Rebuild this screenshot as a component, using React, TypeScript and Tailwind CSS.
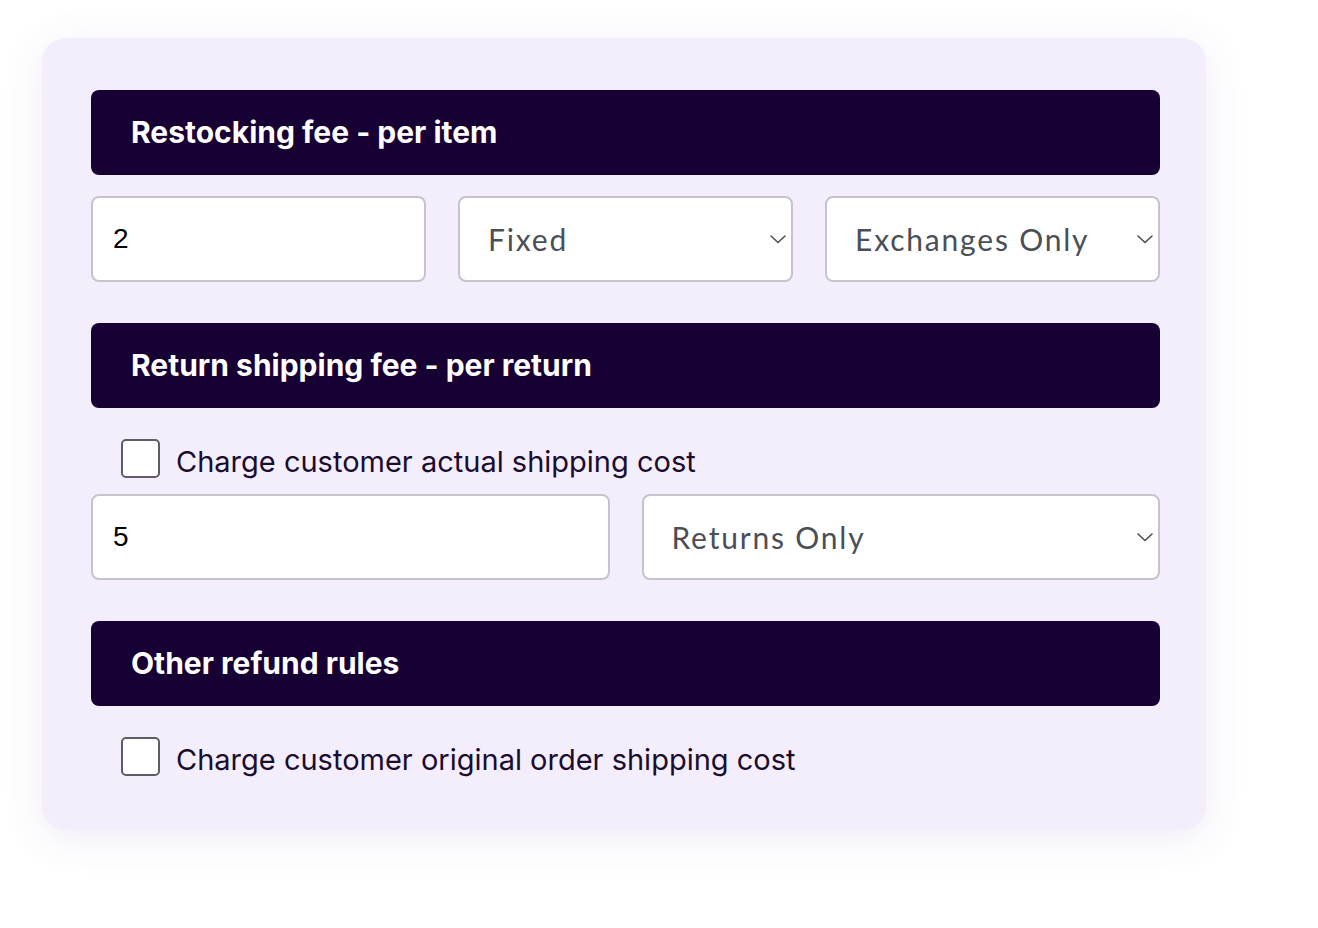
import React from "react";

function Chevron() {
  return (
    <svg width="18" height="10" viewBox="0 0 18 10" fill="none" className="shrink-0">
      <path d="M2 2l7 6.5L16 2" stroke="#4a4f57" strokeWidth="1.6" strokeLinecap="round" strokeLinejoin="round" />
    </svg>
  );
}

function Header({ children }: { children: React.ReactNode }) {
  return (
    <div className="h-[85px] rounded-[8px] bg-[#170034] flex items-center pl-[40px]">
      <span className="text-white font-bold text-[30px] tracking-[0px]" style={{ fontFamily: "Inter, sans-serif" }}>
        {children}
      </span>
    </div>
  );
}

function TextInput({ value }: { value: string }) {
  return (
    <div className="h-[86px] min-w-0 rounded-[8px] border-2 border-[#c6c4ca] bg-white flex items-center pl-[20px]">
      <span className="text-[28px] text-black" style={{ fontFamily: "'Liberation Sans', Arial, sans-serif" }}>{value}</span>
    </div>
  );
}

function Select({ value }: { value: string }) {
  return (
    <div className="h-[86px] min-w-0 rounded-[8px] border-2 border-[#c6c4ca] bg-white flex items-center pl-[28px] pr-[4px] justify-between">
      <span className="text-[30px] text-[#4a4f57] tracking-[1.8px]" style={{ fontFamily: "Lato, sans-serif" }}>{value}</span>
      <Chevron />
    </div>
  );
}

function Check({ label }: { label: string }) {
  return (
    <div className="flex items-center pl-[30px] gap-[16px]">
      <div className="w-[39px] h-[39px] rounded-[5px] border-2 border-[#5f5d63] bg-white" />
      <span className="text-[29px] text-[#1a0c2e] leading-none mt-[6px]" style={{ fontFamily: "Inter, sans-serif" }}>{label}</span>
    </div>
  );
}

export default function App() {
  return (
    <div className="w-[1318px] h-[928px] bg-white pt-[38px] pl-[42px]">
      <div className="w-[1164px] rounded-[24px] bg-[#f4eefc] shadow-[0_8px_40px_rgba(120,90,170,0.12)] pt-[52px] pb-[54px] pl-[49px] pr-[46px] flex flex-col">
        <Header>Restocking fee - per item</Header>
        <div className="grid grid-cols-3 gap-[32px] mt-[21px]">
          <TextInput value="2" />
          <Select value="Fixed" />
          <Select value="Exchanges Only" />
        </div>
        <div className="mt-[41px]">
          <Header>Return shipping fee - per return</Header>
        </div>
        <div className="mt-[31px]">
          <Check label="Charge customer actual shipping cost" />
        </div>
        <div className="grid grid-cols-2 gap-[32px] mt-[16px]">
          <TextInput value="5" />
          <Select value="Returns Only" />
        </div>
        <div className="mt-[41px]">
          <Header>Other refund rules</Header>
        </div>
        <div className="mt-[31px]">
          <Check label="Charge customer original order shipping cost" />
        </div>
      </div>
    </div>
  );
}
